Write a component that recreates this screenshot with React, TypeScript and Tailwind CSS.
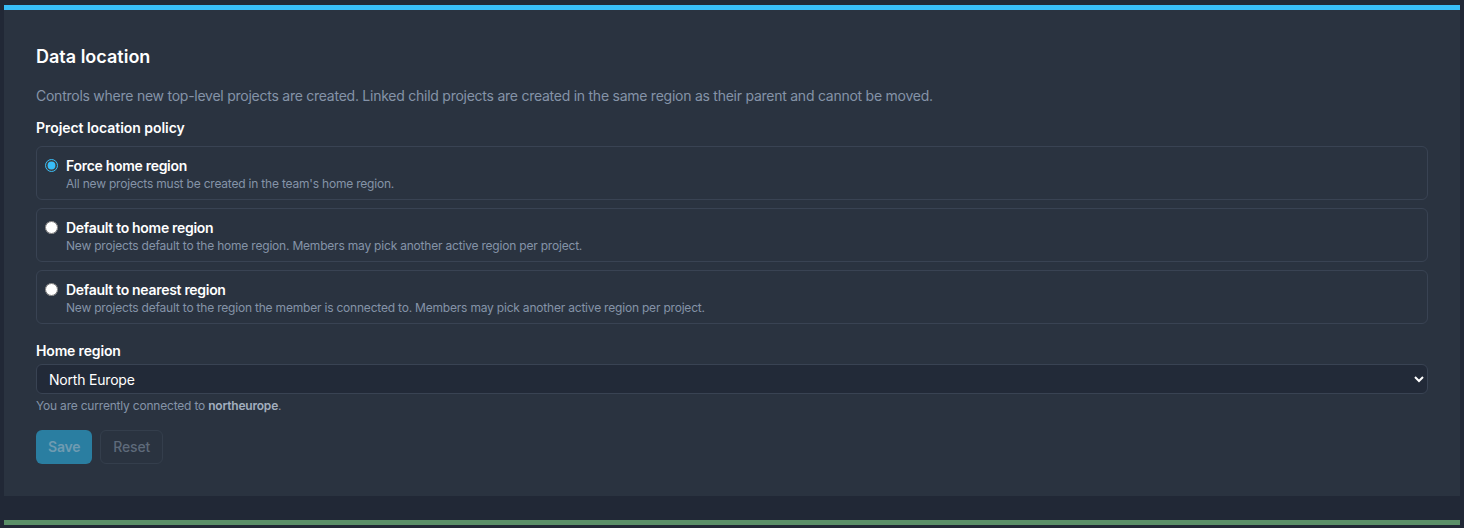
import { useState } from "react";

const options = [
  {
    id: "force",
    title: "Force home region",
    desc: "All new projects must be created in the team's home region.",
  },
  {
    id: "default-home",
    title: "Default to home region",
    desc: "New projects default to the home region. Members may pick another active region per project.",
  },
  {
    id: "default-nearest",
    title: "Default to nearest region",
    desc: "New projects default to the region the member is connected to. Members may pick another active region per project.",
  },
];

export default function App() {
  const [policy, setPolicy] = useState("force");
  const [region, setRegion] = useState("northeurope");

  return (
    <div className="min-h-[528px] bg-[#212836] px-1 pt-[5px] font-['Inter',sans-serif] text-white">
      <div className="border-t-[5px] border-[#38bdf8] bg-[#2a3340] px-8 pb-[32px] pt-[33px]">
        <h2 className="text-lg font-semibold leading-7">Data location</h2>
        <p className="mt-[15px] text-sm tracking-[-0.25px] text-[#8593a8]">
          Controls where new top-level projects are created. Linked child projects are created in the same
          region as their parent and cannot be moved.
        </p>

        <div className="mt-[12px] text-sm font-semibold tracking-[-0.05px]">Project location policy</div>
        <div className="mt-[8px] flex flex-col gap-2">
          {options.map((o) => (
            <label
              key={o.id}
              className="flex cursor-pointer items-start gap-2 rounded-md border border-[#394353] px-2 pb-[7px] pt-[9px]"
            >
              <input
                type="radio"
                name="policy"
                checked={policy === o.id}
                onChange={() => setPolicy(o.id)}
                className="mt-[3px] size-[13px] accent-[#38bdf8]"
              />
              <div>
                <div className="text-sm font-semibold leading-5 tracking-[-0.3px]">{o.title}</div>
                <div className="text-xs leading-4 tracking-[-0.2px] text-[#8593a8]">{o.desc}</div>
              </div>
            </label>
          ))}
        </div>

        <div className="mt-[17px] text-sm font-semibold tracking-[-0.15px]">Home region</div>
        <select
          value={region}
          onChange={(e) => setRegion(e.target.value)}
          className="mt-[3px] h-[30px] w-full rounded-md border border-[#394353] bg-[#222a38] px-2 text-sm tracking-[-0.2px] text-white"
        >
          <option value="northeurope">North Europe</option>
          <option value="westeurope">West Europe</option>
          <option value="eastus">East US</option>
        </select>
        <p className="mt-[4px] text-xs tracking-[-0.2px] text-[#8593a8]">
          You are currently connected to <span className="font-semibold text-[#a3afbf]">northeurope</span>.
        </p>

        <div className="mt-[16px] flex gap-2">
          <button
            disabled
            className="h-[34px] rounded-md bg-[#2a7ea1] px-3 text-sm font-semibold tracking-[-0.2px] text-[#6f9bb1]"
          >
            Save
          </button>
          <button
            disabled
            className="h-[34px] rounded-md border border-[#343e4c] px-3 text-sm font-medium tracking-[-0.2px] text-[#5e6a7a]"
          >
            Reset
          </button>
        </div>
      </div>
      <div className="mt-6 h-[5px] bg-[#5a8f68]" />
    </div>
  );
}
